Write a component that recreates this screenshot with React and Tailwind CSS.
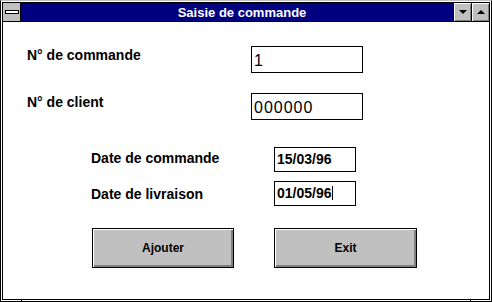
import React from 'react';

const font = { fontFamily: '"Liberation Sans", Arial, sans-serif' };

const TitleButton = ({ up }) => (
    <div className="w-[18px] bg-[#c0c0c0] border-l border-black flex items-center justify-center shadow-[inset_1px_1px_0_#ffffff,inset_-1px_-1px_0_#808080]">
        {up ? (
            <div className="w-0 h-0 border-l-[4px] border-r-[4px] border-b-[4px] border-l-transparent border-r-transparent border-b-black" />
        ) : (
            <div className="w-0 h-0 border-l-[4px] border-r-[4px] border-t-[4px] border-l-transparent border-r-transparent border-t-black" />
        )}
    </div>
);

const Button = ({ label, width }) => (
    <button className={`${width} h-[40px] bg-[#c0c0c0] border border-black shadow-[inset_1px_1px_0_#ffffff,inset_-2px_-2px_0_#808080] flex items-center justify-center text-[12px] font-bold text-black`}>
        {label}
    </button>
);

const App = () => {
    return (
        <div style={font} className="w-[492px] h-[302px] bg-white border border-black border-t-[#c0c0c0] p-[1px] flex relative">
            <div className="flex-1 border border-black flex flex-col">
                {/* title bar */}
                <div className="h-[19px] flex border-b border-black">
                    <div className="w-[18px] bg-[#c0c0c0] border-r border-black flex items-center justify-center">
                        <div className="w-[14px] h-[4px] bg-white border border-black" />
                    </div>
                    <div className="flex-1 bg-[#000080] flex items-center justify-center pl-[10px]">
                        <span className="text-[13px] font-bold text-white leading-none">Saisie de commande</span>
                    </div>
                    <TitleButton />
                    <TitleButton up />
                </div>

                {/* form */}
                <div className="flex flex-col text-black">
                    <div className="flex items-start mt-[24px]">
                        <div className="w-[248px] pl-[24px] pt-[1px] text-[14px] leading-[16px] font-bold">N° de commande</div>
                        <div className="w-[112px] h-[27px] border border-black pl-[2px] pt-[5px] text-[16px] leading-[18px] tracking-[1px]">1</div>
                    </div>
                    <div className="flex items-start mt-[20px]">
                        <div className="w-[248px] pl-[24px] pt-[1px] text-[14px] leading-[16px] font-bold">N° de client</div>
                        <div className="w-[112px] h-[27px] border border-black pl-[2px] pt-[5px] text-[16px] leading-[18px] tracking-[1px]">000000</div>
                    </div>
                    <div className="flex items-start mt-[27px]">
                        <div className="w-[271px] pl-[88px] pt-[3px] text-[14px] leading-[16px] font-bold">Date de commande</div>
                        <div className="w-[82px] h-[25px] border border-black pl-[2px] pt-[3px] text-[14px] leading-[16px] font-bold">15/03/96</div>
                    </div>
                    <div className="flex items-start mt-[9px]">
                        <div className="w-[271px] pl-[88px] pt-[5px] text-[14px] leading-[16px] font-bold">Date de livraison</div>
                        <div className="w-[82px] h-[25px] border border-black pl-[2px] pt-[3px] text-[14px] leading-[16px] font-bold flex items-start">
                            <span>01/05/96</span>
                            <span className="inline-block w-[1px] h-[14px] bg-black mt-[1px]" />
                        </div>
                    </div>
                    <div className="flex mt-[22px] pl-[89px] gap-[40px]">
                        <Button label="Ajouter" width="w-[142px]" />
                        <Button label="Exit" width="w-[143px]" />
                    </div>
                </div>
            </div>
            {/* resize corner ticks */}
            <div className="absolute left-[20px] bottom-0 w-[1px] h-[2px] bg-black" />
            <div className="absolute right-[20px] bottom-0 w-[1px] h-[2px] bg-black" />
        </div>
    );
};

export default App;
